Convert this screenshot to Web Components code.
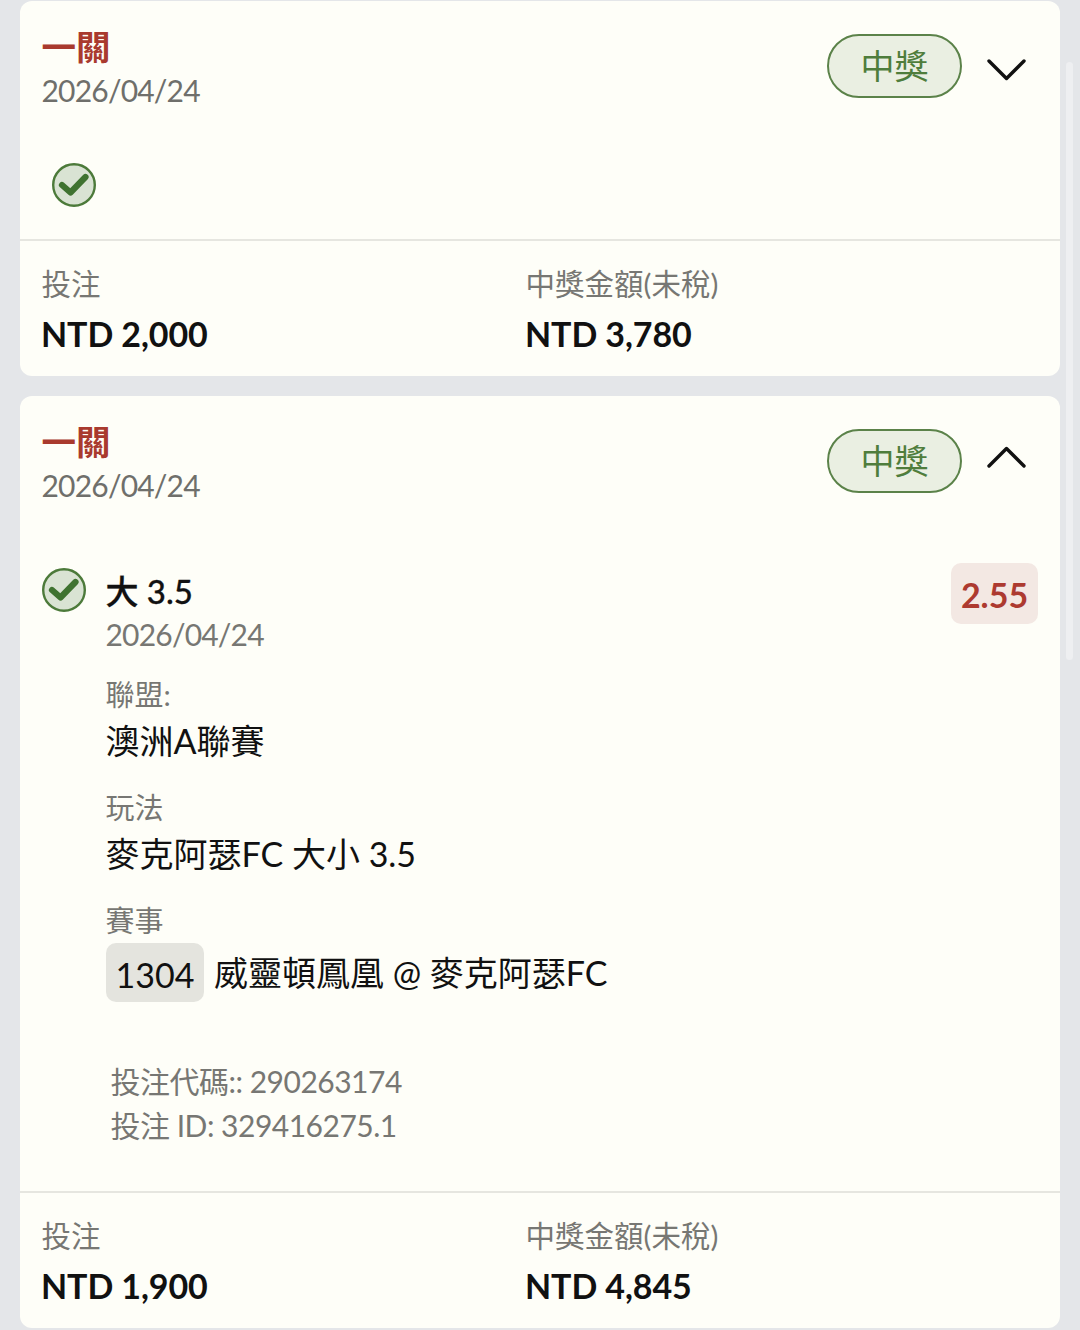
<!DOCTYPE html>
<html lang="zh-Hant">
<head>
<meta charset="utf-8">
<title>投注紀錄</title>
<style>
    html, body { margin: 0; padding: 0; height: 1330px; overflow: hidden; background: #e4e6e9; }
    body { font-family: Lato, "Noto Sans CJK TC", sans-serif; color: #111; position: relative; }
    main { display: flex; flex-direction: column; gap: 20px; padding: 1px 20px 0; }
</style>
</head>
<body>
<main>
    <bet-card title-text="一關" date="2026/04/24" stake="NTD 2,000" payout="NTD 3,780">
        <check-icon style="margin: 49px 0 0 10px; height: 76px"></check-icon>
    </bet-card>
    <bet-card open title-text="一關" date="2026/04/24" stake="NTD 1,900" payout="NTD 4,845">
        <bet-leg name="大 3.5" date="2026/04/24" odds="2.55">
            <leg-field label="聯盟:">澳洲A聯賽</leg-field>
            <leg-field label="玩法">麥克阿瑟FC 大小 3.5</leg-field>
            <leg-field label="賽事" code="1304">威靈頓鳳凰 @ 麥克阿瑟FC</leg-field>
        </bet-leg>
    </bet-card>
</main>
<page-scrollbar></page-scrollbar>

<script>
class CheckIcon extends HTMLElement {
    constructor() {
        super();
        this.attachShadow({ mode: "open" });
        this.shadowRoot.innerHTML = `
            <style>
                :host { display: block; width: 44px; height: 44px; }
                svg { display: block; }
            </style>
            <svg width="44" height="44" viewBox="0 0 44 44">
                <circle cx="22" cy="22" r="20.8" fill="#d9e3d3" stroke="#4c7a3a" stroke-width="2.4"/>
                <path d="M10 22 L18.5 29.5 L33.5 14" fill="none" stroke="#3f7330" stroke-width="6.2" stroke-linecap="round" stroke-linejoin="round"/>
            </svg>`;
    }
}
customElements.define("check-icon", CheckIcon);

class WinBadge extends HTMLElement {
    constructor() {
        super();
        this.attachShadow({ mode: "open" });
        this.shadowRoot.innerHTML = `
            <style>
                :host {
                    display: flex;
                    align-items: center;
                    justify-content: center;
                    box-sizing: border-box;
                    width: 135px;
                    height: 64px;
                    border: 2.5px solid #5b8249;
                    border-radius: 32px;
                    background: #eaefe2;
                    color: #4f7d3c;
                    font-size: 34px;
                    line-height: 1;
                }
            </style>
            <slot></slot>`;
    }
}
customElements.define("win-badge", WinBadge);

class BetCard extends HTMLElement {
    constructor() {
        super();
        this.attachShadow({ mode: "open" });
    }

    connectedCallback() {
        const open = this.hasAttribute("open");
        const chevron = open ? "M2 21 L19.5 3.5 L37 21" : "M2 3 L19.5 20.5 L37 3";
        this.shadowRoot.innerHTML = `
            <style>
                :host {
                    display: block;
                    background: #fefef8;
                    border-radius: 12px;
                    overflow: hidden;
                }
                header {
                    display: flex;
                    justify-content: space-between;
                    padding: 27px 34px 0 21.5px;
                }
                .title {
                    font-size: 34.5px;
                    line-height: 38px;
                    font-weight: 700;
                    color: #a93a2e;
                }
                .date {
                    font-size: 30px;
                    line-height: 48px;
                    letter-spacing: -0.8px;
                    color: #6f6f6b;
                }
                .actions {
                    display: flex;
                    align-items: flex-start;
                    gap: 25px;
                    padding-top: 6px;
                }
                svg { display: block; margin-top: ${open ? "16px" : "24px"}; }
                .body { padding: 0 22px; }
                footer {
                    display: grid;
                    grid-template-columns: 484px 1fr;
                    border-top: 2px solid #e6e6e0;
                    padding: 22px 21px 13px;
                }
                .label {
                    font-size: 29.5px;
                    line-height: 42px;
                    margin-left: 0.5px;
                    color: #777773;
                }
                .value {
                    font-size: 34px;
                    line-height: 58px;
                    font-weight: 700;
                    letter-spacing: -0.1px;
                    color: #111;
                }
            </style>
            <header>
                <div>
                    <div class="title">${this.getAttribute("title-text")}</div>
                    <div class="date">${this.getAttribute("date")}</div>
                </div>
                <div class="actions">
                    <win-badge>中獎</win-badge>
                    <svg width="39" height="24" viewBox="0 0 39 24">
                        <path d="${chevron}" fill="none" stroke="#111" stroke-width="3.4" stroke-linecap="round" stroke-linejoin="round"/>
                    </svg>
                </div>
            </header>
            <div class="body"><slot></slot></div>
            <footer>
                <div>
                    <div class="label">投注</div>
                    <div class="value">${this.getAttribute("stake")}</div>
                </div>
                <div>
                    <div class="label">中獎金額(未稅)</div>
                    <div class="value">${this.getAttribute("payout")}</div>
                </div>
            </footer>`;
    }
}
customElements.define("bet-card", BetCard);

class BetLeg extends HTMLElement {
    constructor() {
        super();
        this.attachShadow({ mode: "open" });
    }

    connectedCallback() {
        this.shadowRoot.innerHTML = `
            <style>
                :host {
                    display: grid;
                    grid-template-columns: 63.5px 1fr;
                    padding: 59px 0 44px;
                }
                .top { display: flex; justify-content: space-between; }
                .name {
                    font-size: 33px;
                    line-height: 44px;
                    font-weight: 500;
                    -webkit-text-stroke: 0.3px #111;
                    color: #111;
                    padding-top: 1px;
                }
                .date {
                    font-size: 30px;
                    line-height: 42px;
                    letter-spacing: -0.8px;
                    color: #777773;
                }
                .odds {
                    box-sizing: border-box;
                    width: 87px;
                    height: 61px;
                    margin: -5px 0 0;
                    border-radius: 10px;
                    background: #f3e8e3;
                    color: #ad3a30;
                    font-size: 34px;
                    font-weight: 700;
                    line-height: 63px;
                    text-align: center;
                }
                .fields { display: flex; flex-direction: column; gap: 20px; margin-top: 19px; }
                .ids {
                    padding: 57px 0 0 5px;
                    font-size: 30px;
                    line-height: 44px;
                    letter-spacing: -0.5px;
                    color: #777773;
                }
            </style>
            <check-icon></check-icon>
            <div>
                <div class="top">
                    <div>
                        <div class="name">${this.getAttribute("name")}</div>
                        <div class="date">${this.getAttribute("date")}</div>
                    </div>
                    <div class="odds">${this.getAttribute("odds")}</div>
                </div>
                <div class="fields"><slot></slot></div>
                <div class="ids">
                    <div>投注代碼:: 290263174</div>
                    <div>投注 ID: 329416275.1</div>
                </div>
            </div>`;
    }
}
customElements.define("bet-leg", BetLeg);

class LegField extends HTMLElement {
    constructor() {
        super();
        this.attachShadow({ mode: "open" });
    }

    connectedCallback() {
        const code = this.getAttribute("code");
        this.shadowRoot.innerHTML = `
            <style>
                :host { display: block; }
                .label {
                    font-size: 29px;
                    line-height: 42px;
                    color: #777773;
                }
                .value {
                    display: flex;
                    align-items: center;
                    gap: 10px;
                    font-size: 34px;
                    line-height: 52px;
                    color: #111;
                    margin-top: ${code ? "1px" : "-1px"};
                }
                .code {
                    box-sizing: border-box;
                    width: 98px;
                    height: 59px;
                    margin-left: 0.5px;
                    border-radius: 10px;
                    background: #e4e4de;
                    font-size: 34px;
                    line-height: 63px;
                    text-align: center;
                }
            </style>
            <div class="label">${this.getAttribute("label")}</div>
            <div class="value">
                ${code ? `<span class="code">${code}</span>` : ""}
                <span><slot></slot></span>
            </div>`;
    }
}
customElements.define("leg-field", LegField);

class PageScrollbar extends HTMLElement {
    constructor() {
        super();
        this.attachShadow({ mode: "open" });
        this.shadowRoot.innerHTML = `
            <style>
                :host {
                    position: absolute;
                    top: 62px;
                    left: 1066px;
                    width: 7px;
                    height: 598px;
                    border-radius: 4px;
                    background: #eeeff1;
                }
            </style>`;
    }
}
customElements.define("page-scrollbar", PageScrollbar);
</script>
</body>
</html>
